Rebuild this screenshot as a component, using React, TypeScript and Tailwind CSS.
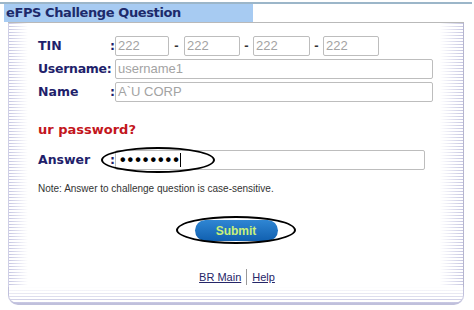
import React from "react";

const stripes =
  "bg-[repeating-linear-gradient(to_bottom,#c6c6e2_0px,#c6c6e2_1px,#ffffff_1px,#ffffff_3px)]";

const Field: React.FC<{ value: string; className?: string }> = ({ value, className }) => (
  <div
    className={`h-[20px] border border-[#bdbdbd] rounded-[2px] bg-white pl-[2px] text-[13px] leading-[18px] font-normal text-[#a3a3a3] font-['Liberation_Sans',Arial,sans-serif] ${className ?? ""}`}
  >
    {value}
  </div>
);

const Dash = ({ w }: { w: string }) => (
  <span className={`${w} text-center text-[13px] font-bold text-[#333] font-['Liberation_Sans',Arial,sans-serif]`}>-</span>
);

const App: React.FC = () => {
  return (
    <div className="w-[474px] h-[310px] bg-white pt-[2px] overflow-hidden font-['DejaVu_Sans',Verdana,sans-serif]">
      <div className="h-[2px] w-[472px] bg-[#9cb6c9]" />
      <div className="ml-[4px] w-[249px] h-[18px] bg-[#a7cbf2] pl-[2px] text-[13px] leading-[18px] tracking-[-0.4px] font-bold text-[#1d2a6b] whitespace-nowrap">
        eFPS Challenge Question
      </div>

      <div className="ml-[8px] w-[456px] h-[283px] flex flex-col border-t border-[#b9b9b9]">
        <div className="flex flex-1">
          {/* left stripe */}
          <div className={`w-[20px] relative border-l border-[#cfcfe6] ${stripes}`}>
            <div className="absolute inset-0 bg-gradient-to-r from-transparent to-white" />
          </div>

          <div className="flex-1 pl-[10px] pt-[13px] text-[12.5px] font-bold text-[#1f1f6b]">
            {/* TIN */}
            <div className="flex items-center h-[20px]">
              <span className="w-[72px]">TIN</span>
              <span className="w-[5px]">:</span>
              <Field value="222" className="w-[54px]" />
              <Dash w="w-[15px]" />
              <Field value="222" className="w-[56px]" />
              <Dash w="w-[13px]" />
              <Field value="222" className="w-[57px]" />
              <Dash w="w-[13px]" />
              <Field value="222" className="w-[56px]" />
            </div>
            <div className="flex items-center h-[20px] mt-[3px]">
              <span className="w-[77px] whitespace-nowrap tracking-[-0.3px]">Username:</span>
              <Field value="username1" className="w-[318px]" />
            </div>
            <div className="flex items-center h-[20px] mt-[3px]">
              <span className="w-[72px]">Name</span>
              <span className="w-[5px]">:</span>
              <Field value="A`U CORP" className="w-[318px]" />
            </div>

            <div className="mt-[20px] text-[13px] leading-[16px] text-[#c3161c]">ur password?</div>

            <div className="relative flex items-center h-[20px] mt-[12px]">
              <span className="w-[72px]">Answer</span>
              <span className="w-[5px]">:</span>
              <div className="w-[310px] h-[20px] border border-[#bdbdbd] rounded-[2px] bg-white pl-[4px] flex items-center">
                <span className="text-[16px] leading-[18px] tracking-[2px] text-black font-['Liberation_Sans',Arial,sans-serif]">
                  ••••••••
                </span>
                <span className="w-[1px] h-[14px] bg-black -ml-[1px]" />
              </div>
              <div className="absolute left-[63px] top-[-3px] w-[114px] h-[26px] rounded-[50%] border-[2.5px] border-black" />
            </div>

            <div className="mt-[13px] text-[10px] leading-[12px] font-normal text-[#333] font-['Liberation_Sans',Arial,sans-serif]">
              Note: Answer to challenge question is case-sensitive.
            </div>

            <div className="mt-[25px] pr-[6px] flex justify-center">
              <div className="relative">
                <div className="w-[83px] h-[21px] rounded-full bg-gradient-to-b from-[#2f86d3] to-[#1060b0] flex items-center justify-center text-[12px] font-bold text-[#c9f07a] font-['Liberation_Sans',Arial,sans-serif]">
                  Submit
                </div>
                <div className="absolute left-[-19px] top-[-4px] w-[120px] h-[28px] rounded-[50%] border-[2.5px] border-black" />
              </div>
            </div>

            <div className="mt-[28px] pr-[4px] flex justify-center items-center text-[11px] leading-[14px] font-normal text-[#262668] font-['Liberation_Sans',Arial,sans-serif]">
              <span className="underline">BR Main</span>
              <span className="mx-[5px] w-[1px] h-[16px] bg-[#999]" />
              <span className="underline">Help</span>
            </div>
          </div>

          {/* right stripe */}
          <div className={`w-[24px] relative border-r border-[#b5b5cf] ${stripes}`}>
            <div className="absolute inset-0 bg-gradient-to-l from-transparent to-white" />
          </div>
        </div>

        {/* bottom stripe */}
        <div className={`h-[18px] relative rounded-b-[10px] border-l border-r border-b-[2px] border-[#c0c0dc] ${stripes}`}>
          <div className="absolute inset-0 bg-gradient-to-t from-transparent to-white" />
        </div>
      </div>
    </div>
  );
};

export default App;
